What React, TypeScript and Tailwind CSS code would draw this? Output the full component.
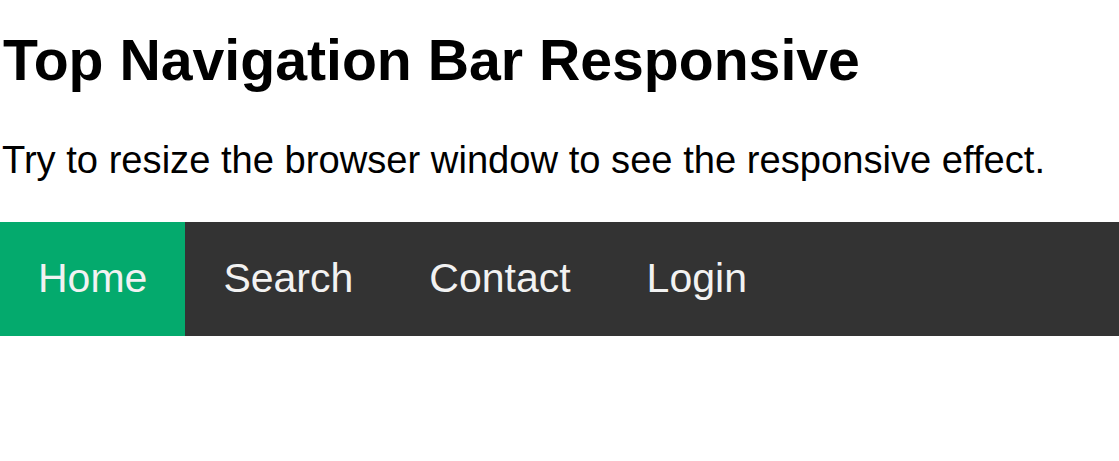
const links = ["Home", "Search", "Contact", "Login"];

export default function App() {
  return (
    <div className="min-h-[461px] bg-white font-['Liberation_Sans',Arial,sans-serif] text-black">
      <h2 className="pl-[3px] pt-[27px] text-[57.2px] font-bold leading-[66px]">
        Top Navigation Bar Responsive
      </h2>
      <p className="mt-[45px] pl-[2px] text-[38.15px] leading-[44px]">
        Try to resize the browser window to see the responsive effect.
      </p>
      <nav className="mt-[40px] flex h-[114px] bg-[#333333]">
        {links.map((link, i) => (
          <a
            key={link}
            href="#"
            className={
              i === 0
                ? "flex items-center bg-[#04aa6d] px-[38px] text-[41px] text-[#f2f2f2]"
                : "flex items-center px-[38px] text-[41px] text-[#f2f2f2]"
            }
          >
            {link}
          </a>
        ))}
      </nav>
    </div>
  );
}
